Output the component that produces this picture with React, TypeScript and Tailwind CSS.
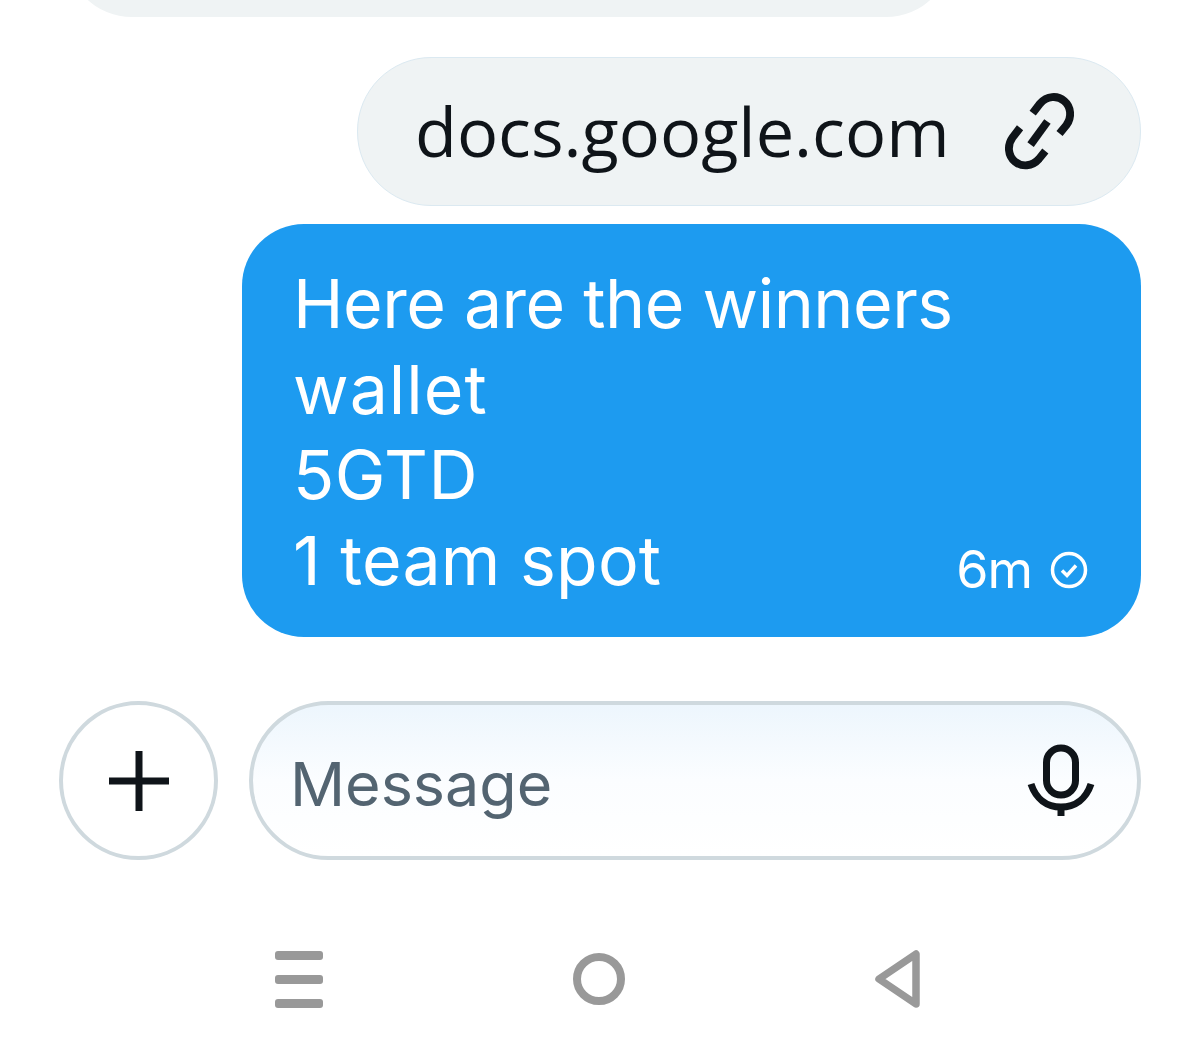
function LinkIcon() {
  return (
    <svg width="80" height="80" viewBox="0 0 76 76" fill="none" stroke="#0f1419" strokeWidth="7.500">
      <path d="M44 56l-6 7.500c-6.500 7.500-16.500 8-23 2.500s-7.500-15.500-2-23l7-9" />
      <path d="M32 20l7-9c6.500-7.500 16.500-8 23-2.500s7.500 15.500 2 23l-6.500 8" />
      <path d="M46 28L30 50" />
    </svg>
  );
}

function MicIcon() {
  return (
    <svg width="68" height="76" viewBox="0 0 68 76" fill="none" stroke="#0f1419" strokeWidth="7">
      <rect x="19.500" y="4" width="29" height="47" rx="14.500" />
      <path d="M4 40c5 15 16 23 30 23s25-8 30-23" />
      <path d="M34 63v9" />
    </svg>
  );
}

export default function App() {
  return (
    <div className="w-[1200px] h-[1051px] overflow-hidden bg-white flex flex-col">
      <div className="h-[17px] overflow-hidden pl-[66px] flex items-end shrink-0">
        <div className="w-[886px] h-[140px] shrink-0 rounded-[66px] bg-[#eff3f4]" />
      </div>

      <div className="mt-[40px] pr-[59px] flex flex-col items-end gap-[18px]">
        <div className="w-[784px] h-[149px] rounded-[74px] bg-[#eff3f4] border border-[#dbe9f1] flex items-center justify-between pl-[57px] pr-[61px]">
          <span className="text-[68.500px] leading-none text-[#0f1419] font-['Open_Sans',sans-serif]">
            docs.google.com
          </span>
          <LinkIcon />
        </div>

        <div className="w-[899px] h-[413px] rounded-[62px] bg-[#1d9bf0] text-white pl-[51px] pr-[54px] pt-[37px] relative font-['Inter',sans-serif]">
          <p className="text-[68px] leading-[85.500px] tracking-[-0.5px]">Here are the winners</p>
          <p className="text-[68px] leading-[85.500px] tracking-[1px]">wallet</p>
          <p className="text-[68px] leading-[85.500px] tracking-[0.5px]">5GTD</p>
          <p className="text-[68px] leading-[85.500px] tracking-[0.2px]">1 team spot</p>
          <div className="absolute right-[53px] bottom-[41px] flex items-center gap-[18px]">
            <span className="text-[52px] leading-none tracking-[-1px]">6m</span>
            <svg width="38" height="38" viewBox="0 0 38 38" fill="none" stroke="white" strokeWidth="3.500">
              <circle cx="19" cy="19" r="16.500" />
              <path d="M12 19.500l5 5 9-10" />
            </svg>
          </div>
        </div>
      </div>

      <div className="mt-[64px] pl-[59px] pr-[59px] flex gap-[31px]">
        <div className="w-[159px] h-[159px] shrink-0 rounded-full border-[4px] border-[#cfd9de] flex items-center justify-center">
          <svg width="62" height="62" viewBox="0 0 62 62" fill="none" stroke="#0f1419" strokeWidth="7">
            <path d="M31 1v60M1 31h60" />
          </svg>
        </div>
        <div className="flex-1 h-[159px] rounded-[80px] border-[4px] border-[#cfd9de] bg-gradient-to-b from-[#edf6fd] via-[#fbfdff] to-white flex items-center justify-between pl-[37px] pr-[42px]">
          <span className="text-[61px] leading-none text-[#536471] pt-[8px] font-['Inter',sans-serif]">Message</span>
          <div className="pt-[2px]">
            <MicIcon />
          </div>
        </div>
      </div>

      <div className="mt-[90px] h-[58px] flex justify-center items-center gap-[250px] pr-[5px]">
        <div className="flex flex-col gap-[15px]">
          <div className="w-[48px] h-[9px] rounded-[3px] bg-[#999999]" />
          <div className="w-[48px] h-[9px] rounded-[3px] bg-[#999999]" />
          <div className="w-[48px] h-[9px] rounded-[3px] bg-[#999999]" />
        </div>
        <div className="w-[52px] h-[52px] rounded-full border-[8px] border-[#999999]" />
        <svg width="46" height="58" viewBox="0 0 46 58" fill="none" stroke="#999999" strokeWidth="7.500" strokeLinejoin="round">
          <path d="M41 4v50L4 29z" />
        </svg>
      </div>
    </div>
  );
}
